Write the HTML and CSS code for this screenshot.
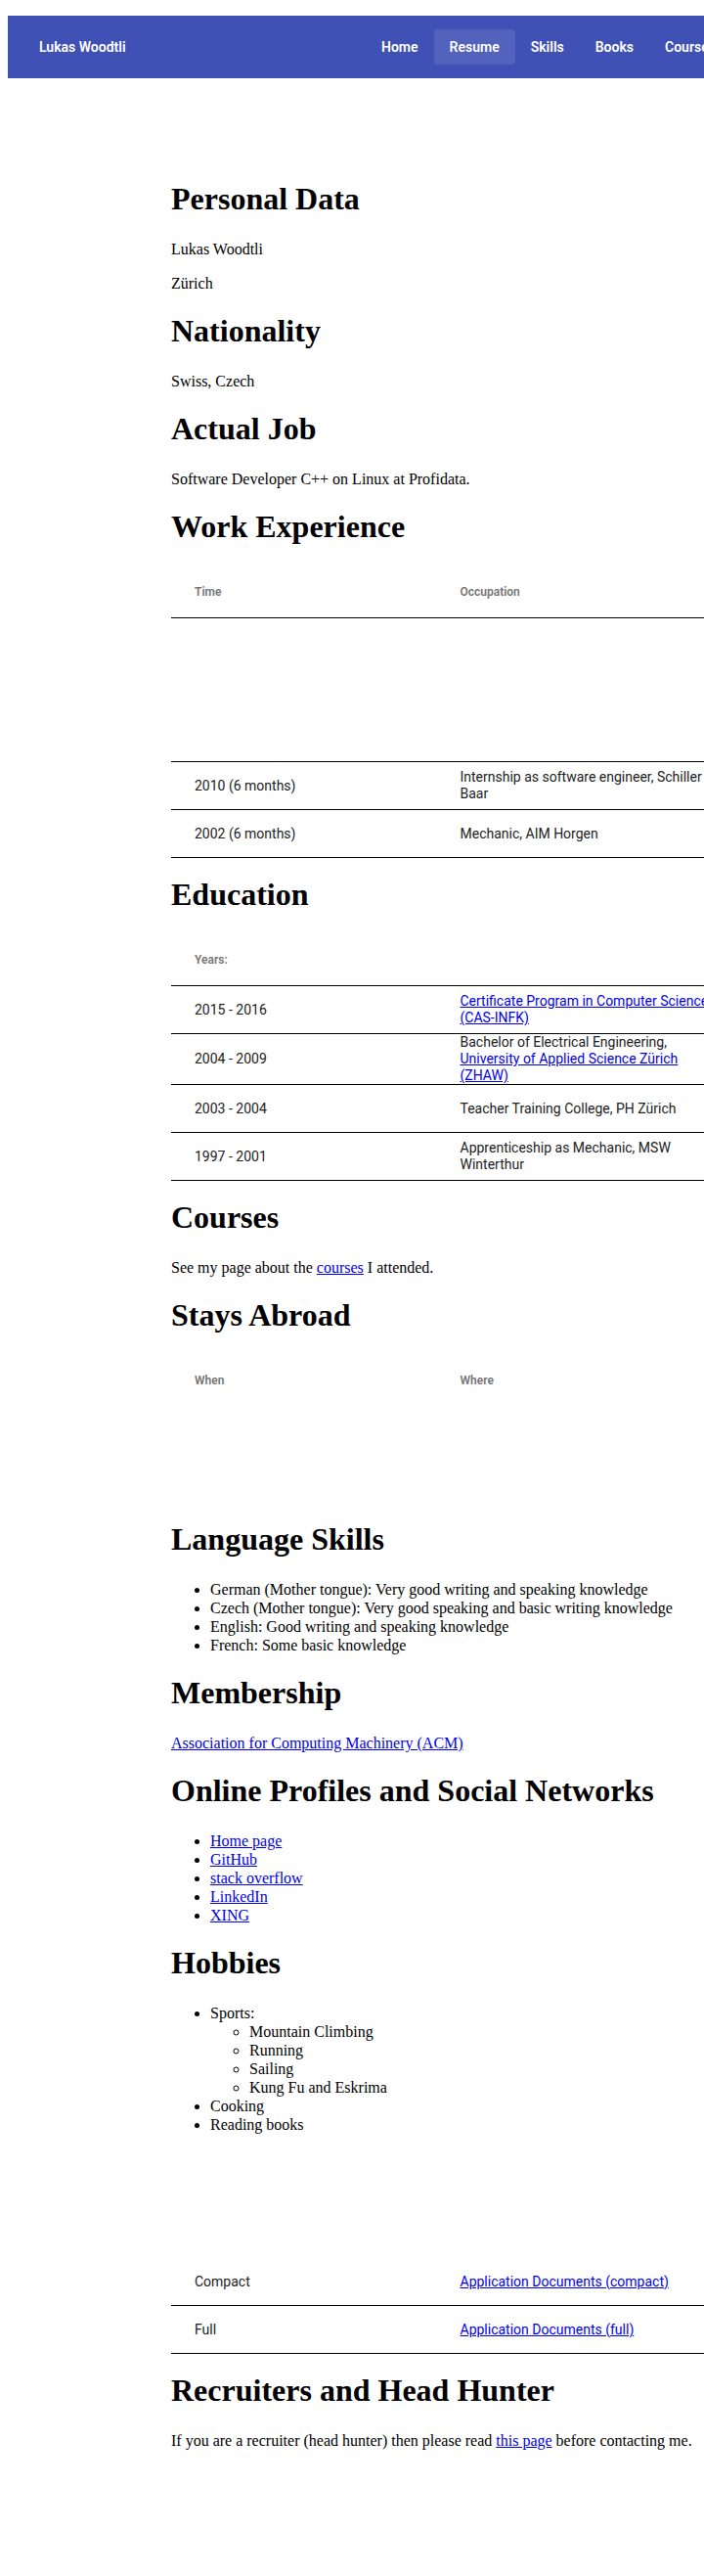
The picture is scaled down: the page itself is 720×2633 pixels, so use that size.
FILE: index.html
```html
<!DOCTYPE html>
<html lang="en">
<head>
<meta charset="utf-8">
<meta name="viewport" content="width=device-width, initial-scale=1">
<title>Resume - Lukas Woodtli</title>
<link rel="stylesheet" href="styles.css">
</head>
<body class="page">
<header class="toolbar">
  <div class="brand">Lukas Woodtli</div>
  <nav class="nav">
    <a class="nav-link" href="#home">Home</a>
    <a class="nav-link nav-link--active" href="#resume" aria-current="page">Resume</a>
    <a class="nav-link" href="#skills">Skills</a>
    <a class="nav-link" href="#books">Books</a>
    <a class="nav-link" href="#courses">Courses</a>
  </nav>
</header>
<main class="content">
  <section class="section">
    <h1>Personal Data</h1>
    <p>Lukas Woodtli</p>
    <p>Zürich</p>
  </section>
  <section class="section">
    <h1>Nationality</h1>
    <p>Swiss, Czech</p>
  </section>
  <section class="section">
    <h1>Actual Job</h1>
    <p>Software Developer C++ on Linux at Profidata.</p>
  </section>
  <section class="section section--table">
    <h1>Work Experience</h1>
    <table class="table">
      <thead><tr><th scope="col">Time</th><th scope="col">Occupation</th></tr></thead>
      <tbody>
        <tr class="row--tall"><td></td><td></td></tr>
        <tr><td>2010 (6 months)</td><td>Internship as software engineer, Schiller Baar</td></tr>
        <tr><td>2002 (6 months)</td><td>Mechanic, AIM Horgen</td></tr>
      </tbody>
    </table>
  </section>
  <section class="section section--table">
    <h1>Education</h1>
    <table class="table">
      <thead><tr><th scope="col">Years:</th><th></th></tr></thead>
      <tbody>
        <tr><td>2015 - 2016</td><td><a href="#cas">Certificate Program in Computer Science (CAS-INFK)</a></td></tr>
        <tr><td>2004 - 2009</td><td>Bachelor of Electrical Engineering, <a href="#zhaw">University of Applied Science Zürich (ZHAW)</a></td></tr>
        <tr><td>2003 - 2004</td><td>Teacher Training College, PH Zürich</td></tr>
        <tr><td>1997 - 2001</td><td>Apprenticeship as Mechanic, MSW Winterthur</td></tr>
      </tbody>
    </table>
  </section>
  <section class="section">
    <h1>Courses</h1>
    <p>See my page about the <a href="#courses">courses</a> I attended.</p>
  </section>
  <section class="section section--table">
    <h1>Stays Abroad</h1>
    <table class="table table--plain">
      <thead><tr><th scope="col">When</th><th scope="col">Where</th></tr></thead>
      <tbody>
        <tr><td></td><td></td></tr>
        <tr><td></td><td></td></tr>
      </tbody>
    </table>
  </section>
  <section class="section">
    <h1>Language Skills</h1>
    <ul>
      <li>German (Mother tongue): Very good writing and speaking knowledge</li>
      <li>Czech (Mother tongue): Very good speaking and basic writing knowledge</li>
      <li>English: Good writing and speaking knowledge</li>
      <li>French: Some basic knowledge</li>
    </ul>
  </section>
  <section class="section">
    <h1>Membership</h1>
    <p><a href="#acm">Association for Computing Machinery (ACM)</a></p>
  </section>
  <section class="section">
    <h1>Online Profiles and Social Networks</h1>
    <ul>
      <li><a href="#home">Home page</a></li>
      <li><a href="#github">GitHub</a></li>
      <li><a href="#stackoverflow">stack overflow</a></li>
      <li><a href="#linkedin">LinkedIn</a></li>
      <li><a href="#xing">XING</a></li>
    </ul>
  </section>
  <section class="section">
    <h1>Hobbies</h1>
    <ul>
      <li>Sports:
        <ul>
          <li>Mountain Climbing</li>
          <li>Running</li>
          <li>Sailing</li>
          <li>Kung Fu and Eskrima</li>
        </ul>
      </li>
      <li>Cooking</li>
      <li>Reading books</li>
    </ul>
  </section>
  <section class="section section--table section--documents">
    <table class="table">
      <tbody>
        <tr><td>Compact</td><td><a href="#compact">Application Documents (compact)</a></td></tr>
        <tr><td>Full</td><td><a href="#full">Application Documents (full)</a></td></tr>
      </tbody>
    </table>
  </section>
  <section class="section">
    <h1>Recruiters and Head Hunter</h1>
    <p>If you are a recruiter (head hunter) then please read <a href="#recruiters">this page</a> before contacting me.</p>
  </section>
</main>
</body>
</html>
```
FILE: styles.css
```css
.page {
  margin: 16px 0 0 8px;
  background: #fff;
  color: #000;
  font-family: "Liberation Serif", "Times New Roman", serif;
  font-size: 16px;
  line-height: 19px;
}

a {
  color: #0000ee;
}

.toolbar {
  display: flex;
  align-items: center;
  height: 64px;
  padding-left: 32px;
  overflow: hidden;
  background: #3f51b5;
  color: #fff;
  font-family: Roboto, sans-serif;
  font-size: 14px;
  font-weight: 600;
}

.brand {
  flex: 1 0 auto;
  min-width: 334px;
}

.nav {
  display: flex;
}

.nav-link {
  padding: 0 16px;
  border-radius: 4px;
  color: inherit;
  line-height: 36px;
  text-decoration: none;
}

.nav-link--active {
  background: #5362bc;
}

.content {
  padding: 105px 0 80px 167px;
  overflow: hidden;
}

.section {
  margin-bottom: 21px;
}

.section--table {
  margin-bottom: 19px;
}

.section--documents {
  padding-top: 106px;
}

h1 {
  margin: 0 0 23px;
  font-size: 32px;
  line-height: 37px;
  white-space: nowrap;
}

p {
  margin: 0 0 16px;
}

.section > p:last-child {
  margin-bottom: 0;
}

ul {
  margin: 0;
  padding-left: 40px;
}

.table {
  width: 100%;
  min-width: 591px;
  table-layout: fixed;
  border-spacing: 0;
  color: #212121;
  font-family: Roboto, sans-serif;
  font-size: 14px;
  line-height: 17px;
}

.table th,
.table td {
  height: 48px;
  padding: 0 24px 0 0;
  border-bottom: 1px solid #000;
  text-align: left;
}

.table th:first-child,
.table td:first-child {
  padding-left: 24px;
}

.table th {
  height: 51px;
  color: #757575;
  font-size: 12px;
  font-weight: 600;
}

.table .row--tall td {
  height: 146px;
}

.table--plain th,
.table--plain td {
  border-bottom-color: transparent;
}
```
